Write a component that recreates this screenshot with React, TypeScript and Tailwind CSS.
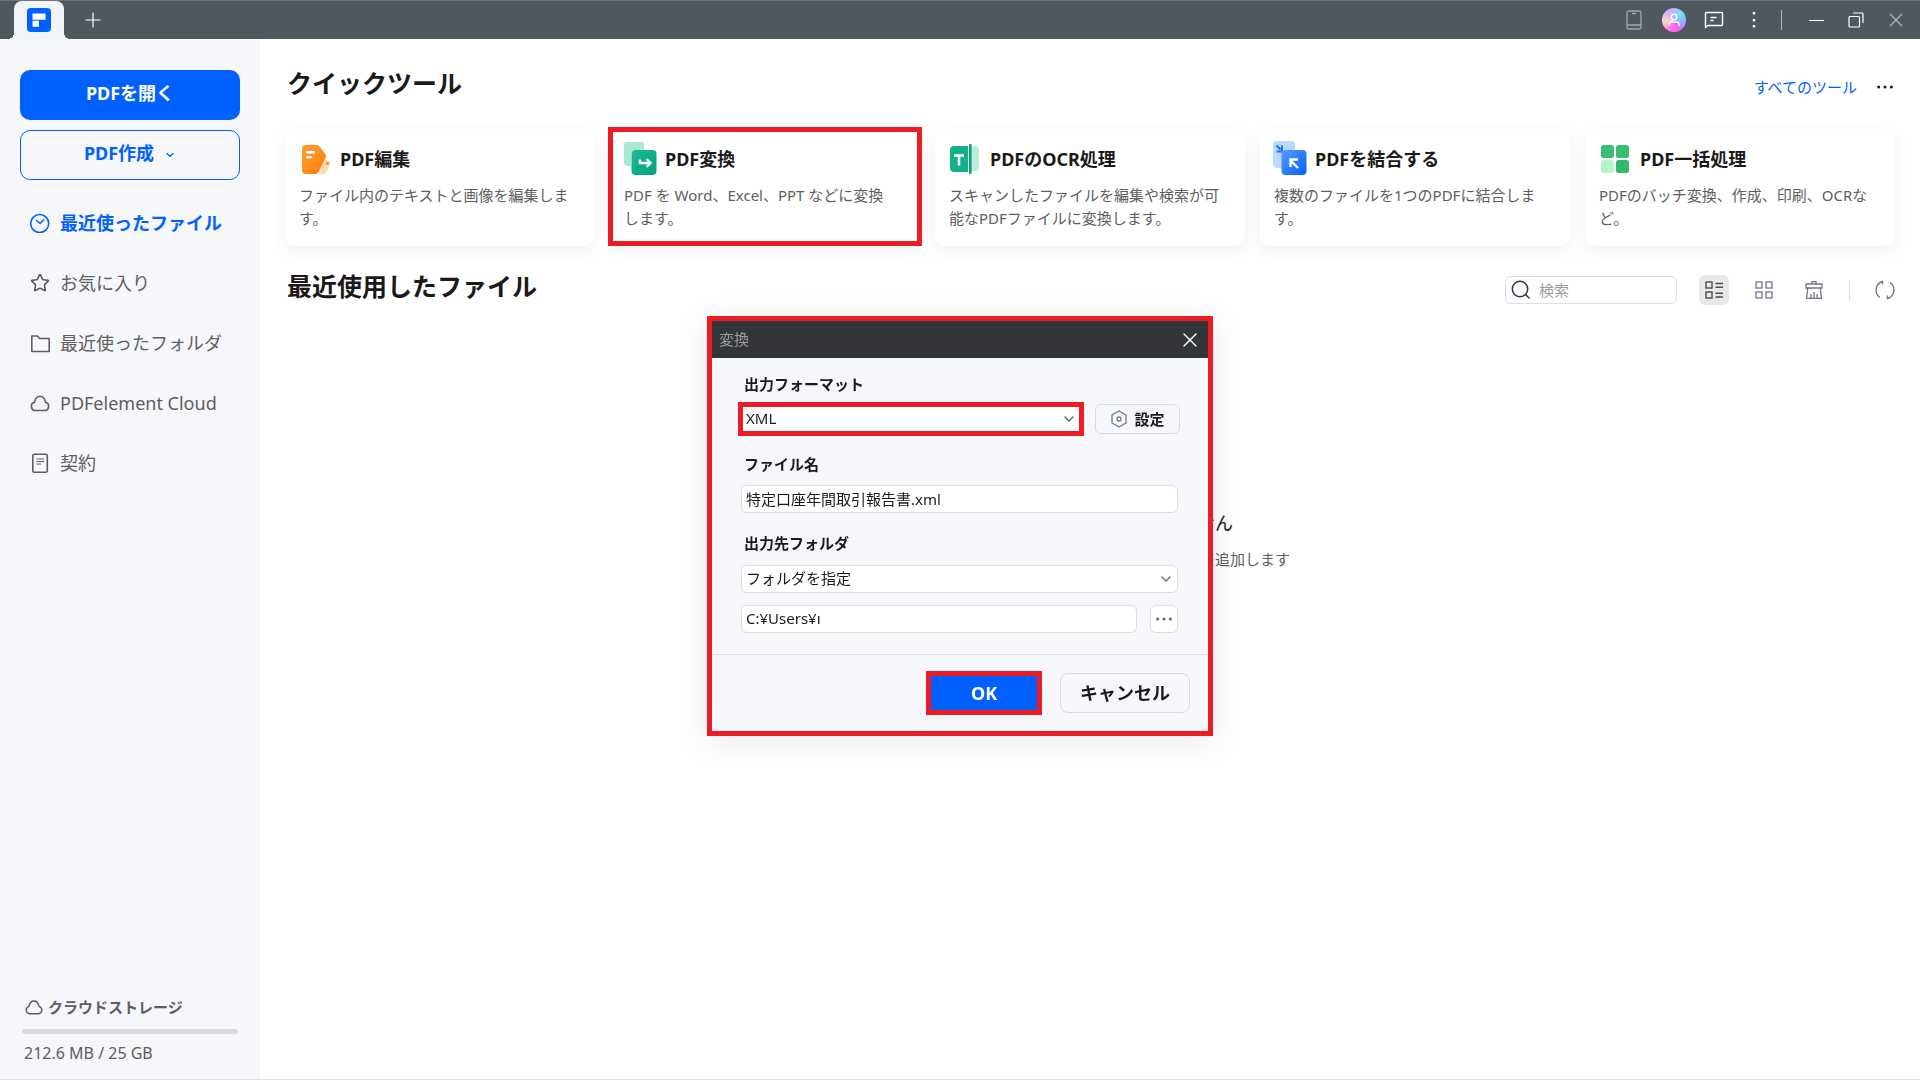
import { useState } from "react";
import type { ReactNode } from "react";
import { ChevronDown, Plus, Star, X } from "lucide-react";

const formats = ["XML", "Word", "Excel", "PPT"];
const folders = ["フォルダを指定", "元のフォルダ"];

function EditIcon() {
  return (
    <svg viewBox="0 0 34 34" className="size-[34px]">
      <defs>
        <linearGradient id="edit" x1="0" y1="0" x2="1" y2="1">
          <stop offset="0" stopColor="#ff9d33" />
          <stop offset="1" stopColor="#ff7f08" />
        </linearGradient>
      </defs>
      <path d="M7 3h10.500a4 4 0 0 1 3 1.400l6 8a3 3 0 0 1 .1 3.600l-7 14a4 4 0 0 1-3 2H7a4 4 0 0 1-4-4V7a4 4 0 0 1 4-4z" fill="url(#edit)" />
      <rect x="7" y="9" width="9" height="2.600" rx="1" fill="#fff" />
      <rect x="7" y="14" width="6" height="2.600" rx="1" fill="#fff" />
      <path d="M26 19.500c1.500-2 5.500-.8 5 1.500-.7 4-3 8-5 10.200-1.200 1.300-4.500 1.300-4.700-.7-.3-3 2.400-8 4.700-11z" fill="#ffd9a8" />
      <circle cx="28.500" cy="21.500" r="1.600" fill="#ff8a14" />
    </svg>
  );
}

function ConvertIcon() {
  return (
    <svg viewBox="0 0 34 34" className="size-[34px]">
      <defs>
        <linearGradient id="convert" x1="0" y1="0" x2="1" y2="1">
          <stop offset="0" stopColor="#22b896" />
          <stop offset="1" stopColor="#00a47e" />
        </linearGradient>
      </defs>
      <rect x="0" y="-1" width="20" height="25" rx="4" fill="#abe9d4" />
      <rect x="7" y="8" width="25" height="32" rx="4" fill="#fff" />
      <rect x="7.500" y="8" width="25" height="25" rx="4" fill="url(#convert)" />
      <path d="M16 17.500v3.500h9" fill="none" stroke="#fff" strokeWidth="2.400" />
      <path d="M22.500 17l4 4-4 4" fill="none" stroke="#fff" strokeWidth="2.400" />
    </svg>
  );
}

function OcrIcon() {
  return (
    <svg viewBox="0 0 34 34" className="size-[34px]">
      <rect x="20" y="4" width="10" height="25" rx="4" fill="#b8eedb" />
      <path d="M5 4h14v26H5a4 4 0 0 1-4-4V8a4 4 0 0 1 4-4z" fill="#14b08a" />
      <rect x="20" y="2" width="2.600" height="30" rx="1" fill="#00a47e" />
      <path d="M5 13.500h10M10 13.500v10" stroke="#fff" strokeWidth="2.500" />
    </svg>
  );
}

function MergeIcon() {
  return (
    <svg viewBox="0 0 34 34" className="size-[34px] overflow-visible">
      <defs>
        <linearGradient id="merge" x1="0" y1="0" x2="1" y2="1">
          <stop offset="0" stopColor="#5a9bff" />
          <stop offset="1" stopColor="#0061ff" />
        </linearGradient>
      </defs>
      <rect x="-1" y="-1" width="22" height="27" rx="4" fill="#b9d9ff" />
      <path d="M2.500 3.500l4 4M8 3.500v6H2.500" fill="none" stroke="#1a70ff" strokeWidth="2" />
      <rect x="7.500" y="8" width="25" height="25" rx="4" fill="url(#merge)" />
      <path d="M24 26l-7-7M16.500 25v-7.500H24" fill="none" stroke="#fff" strokeWidth="2.400" />
    </svg>
  );
}

function BatchIcon() {
  return (
    <svg viewBox="0 0 34 34" className="size-[34px]">
      <rect x="2" y="3" width="13" height="13" rx="2.500" fill="#3abf72" />
      <rect x="17" y="3" width="13" height="13" rx="2.500" fill="#3abf72" />
      <rect x="2" y="18" width="13" height="13" rx="2.500" fill="#b7f2cd" />
      <rect x="17" y="18" width="13" height="13" rx="2.500" fill="#34b96c" />
    </svg>
  );
}

const tools = [
  { title: "PDF編集", text: "ファイル内のテキストと画像を編集します。", icon: <EditIcon /> },
  { title: "PDF変換", text: "PDF を Word、Excel、PPT などに変換します。", icon: <ConvertIcon />, marked: true },
  { title: "PDFのOCR処理", text: "スキャンしたファイルを編集や検索が可能なPDFファイルに変換します。", icon: <OcrIcon /> },
  { title: "PDFを結合する", text: "複数のファイルを1つのPDFに結合します。", icon: <MergeIcon /> },
  { title: "PDF一括処理", text: "PDFのバッチ変換、作成、印刷、OCRなど。", icon: <BatchIcon /> },
];

const navItems = [
  {
    label: "最近使ったファイル",
    active: true,
    icon: (
      <svg viewBox="0 0 20 20" fill="none" stroke="currentColor" strokeWidth="1.500" className="size-5">
        <circle cx="9.700" cy="10.500" r="9" />
        <path d="M6.200 7l3.800 3.500L14 6.500" />
      </svg>
    ),
  },
  { label: "お気に入り", icon: <Star className="size-5" strokeWidth={2} /> },
  {
    label: "最近使ったフォルダ",
    icon: (
      <svg viewBox="0 0 20 20" fill="none" stroke="currentColor" strokeWidth="1.600" className="size-5">
        <path d="M1.800 3h5.700l2 2.500h9.700v13H1.800z" strokeLinejoin="round" />
      </svg>
    ),
  },
  { label: "PDFelement Cloud", icon: <CloudIcon className="size-5" /> },
  {
    label: "契約",
    icon: (
      <svg viewBox="0 0 20 20" fill="none" stroke="currentColor" strokeWidth="1.600" className="size-5">
        <rect x="2.800" y="1.200" width="14.500" height="18" rx="1.500" />
        <path d="M6.500 6h7.500M6.500 8.500h7.500M6.500 11h4.500" strokeWidth="1.200" />
      </svg>
    ),
  },
];

function CloudIcon({ className }: { className: string }) {
  return (
    <svg viewBox="0 0 20 20" fill="none" stroke="currentColor" strokeWidth="1.600" className={className}>
      <path d="M5 17.500a4.200 4.200 0 0 1-.6-8.200c.8-3.600 2.800-6 5.600-6s4.800 2.400 5.600 6a4.200 4.200 0 0 1-.6 8.200z" />
    </svg>
  );
}

function TitleButton({ label, children }: { label: string; children: ReactNode }) {
  return (
    <button aria-label={label} className="flex h-full w-10 items-center justify-center text-white">
      {children}
    </button>
  );
}

function TitleBar() {
  return (
    <header className="flex h-[39px] items-center border-t border-[#6d757c] bg-[#50575d]">
      <div className="relative ml-[14px] flex h-full w-[50px] items-center justify-center rounded-t-lg bg-[#f0f3f7]">
        <svg viewBox="0 0 26 26" className="size-[26px]">
          <rect x="1" y="1" width="24" height="24" rx="4" fill="#0061ff" />
          <path d="M6.500 6.500h13v6.300h-13zM6.500 13.800h6.500v6h-6.500z" fill="#fff" />
        </svg>
        <span className="absolute right-full bottom-0 size-[6px] bg-[radial-gradient(circle_at_0_0,transparent_6px,#f0f3f7_6px)]" />
        <span className="absolute bottom-0 left-full size-[6px] bg-[radial-gradient(circle_at_100%_0,transparent_6px,#f0f3f7_6px)]" />
      </div>
      <button aria-label="新しいタブ" className="ml-[17px] text-white">
        <Plus className="size-6" strokeWidth={1.2} />
      </button>
      <div className="ml-auto flex h-full items-center pr-1">
        <TitleButton label="モバイル">
          <svg viewBox="0 0 16 20" fill="none" stroke="#a3a8ac" strokeWidth="1.300" className="h-5 w-4">
            <rect x="1" y="1" width="14" height="18" rx="1.500" />
            <path d="M1 15h14M6 3.500h4" />
          </svg>
        </TitleButton>
        <TitleButton label="アカウント">
          <span className="flex size-6 items-center justify-center rounded-full bg-[conic-gradient(from_0deg,#b9b4ff,#6fe0ff,#8fb4ff,#f45cf4,#ff7ae0,#ffd9c0,#d9b8f4,#b9b4ff)]">
            <svg viewBox="0 0 12 14" fill="none" stroke="#fff" strokeWidth="1.300" className="h-[14px] w-3">
              <circle cx="6" cy="4" r="2.800" />
              <path d="M1 13v-1.500a2.500 2.500 0 0 1 2.500-2.500h5a2.500 2.500 0 0 1 2.500 2.500V13" />
            </svg>
          </span>
        </TitleButton>
        <TitleButton label="フィードバック">
          <svg viewBox="0 0 20 18" fill="none" stroke="currentColor" strokeWidth="1.400" className="h-[18px] w-5">
            <path d="M1.500 16.500V2.500a1 1 0 0 1 1-1h15a1 1 0 0 1 1 1v11a1 1 0 0 1-1 1H4z" strokeLinejoin="round" />
            <path d="M6.500 6.500h6M6.500 9.500h3" />
          </svg>
        </TitleButton>
        <TitleButton label="メニュー">
          <svg viewBox="0 0 4 18" fill="currentColor" className="h-[18px] w-1">
            <rect x="0.800" y="1" width="2.400" height="2.400" />
            <rect x="0.800" y="8" width="2.400" height="2.400" />
            <rect x="0.800" y="14" width="2.400" height="2.400" />
          </svg>
        </TitleButton>
        <span className="mr-[14px] ml-[7px] h-5 w-px bg-[#b0b4b7]" />
        <TitleButton label="最小化">
          <span className="h-px w-[15px] bg-white" />
        </TitleButton>
        <TitleButton label="元に戻す">
          <svg viewBox="0 0 16 16" fill="none" stroke="currentColor" strokeWidth="1.200" className="size-4">
            <rect x="1" y="4.500" width="10.500" height="10.500" rx="1" />
            <path d="M5 1h9a1 1 0 0 1 1 1v9" />
          </svg>
        </TitleButton>
        <TitleButton label="閉じる">
          <svg viewBox="0 0 14 14" stroke="#b5b9bc" strokeWidth="1.200" className="size-[14px]">
            <path d="M1 1l12 12M13 1L1 13" />
          </svg>
        </TitleButton>
      </div>
    </header>
  );
}

function Sidebar() {
  return (
    <aside className="flex w-[260px] shrink-0 flex-col bg-[#f5f7fb] px-5 pt-[31px] pb-[14px]">
      <button className="flex h-[50px] items-center justify-center rounded-[10px] bg-[#0061ff] pb-1 text-[18px] font-bold text-white">
        PDFを開く
      </button>
      <button className="mt-[10px] flex h-[50px] items-center justify-center gap-[10px] rounded-[10px] border border-[#0061ff] pb-1 text-[18px] font-bold text-[#0061ff]">
        PDF作成
        <ChevronDown className="mt-1 size-3" strokeWidth={2.5} />
      </button>
      <nav className="mt-[13px]">
        {navItems.map(item => (
          <a
            key={item.label}
            href="#"
            className={
              item.active
                ? "flex h-[60px] items-center gap-[10px] pl-[10px] text-[18px] font-bold text-[#0061ff]"
                : "flex h-[60px] items-center gap-[10px] pl-[10px] text-[18px] text-[#5e5e5e]"
            }
          >
            {item.icon}
            {item.label}
          </a>
        ))}
      </nav>

      {/* Storage */}
      <div className="mt-auto leading-6 text-[#5e5e5e]">
        <div className="flex items-center gap-[5px] pl-[5px] text-[15px] font-bold">
          <CloudIcon className="size-[18px]" />
          クラウドストレージ
        </div>
        <div className="mx-[2px] mt-[10px] h-[5px] rounded-full bg-[#dadada]" />
        <p className="mt-[7px] pl-1 text-[16px]">212.6 MB / 25 GB</p>
      </div>
    </aside>
  );
}

function QuickTools() {
  return (
    <section>
      <div className="flex h-10 items-center justify-between px-[2px]">
        <h1 className="text-[25px] leading-10 font-bold">クイックツール</h1>
        <div className="flex items-center gap-5 pt-2 text-[15px]">
          <a href="#" className="text-[#0061ff]">すべてのツール</a>
          <button aria-label="その他" className="text-[#1a1a1a]">
            <Dots />
          </button>
        </div>
      </div>
      <div className="mt-[26px] grid grid-cols-5 gap-[15px]">
        {tools.map(tool => (
          <article key={tool.title} className="relative h-[117px] rounded-[10px] bg-white pt-[13px] pr-6 pl-[14px] shadow-[0_5px_14px_rgba(60,90,140,0.08)]">
            <div className="flex h-[34px] items-center gap-[7px]">
              {tool.icon}
              <h3 className="text-[18px] leading-6 font-bold">{tool.title}</h3>
            </div>
            <p className="mt-2 text-[15px] leading-[23px] text-[#5e5e5e]">{tool.text}</p>
            {tool.marked && <span className="absolute -inset-x-[2px] -top-[2px] bottom-0 border-[5px] border-[#ed1c24]" />}
          </article>
        ))}
      </div>
    </section>
  );
}

function Dots() {
  return (
    <svg viewBox="0 0 16 4" fill="currentColor" className="h-1 w-4">
      <circle cx="1.700" cy="2" r="1.500" />
      <circle cx="8" cy="2" r="1.500" />
      <circle cx="14.300" cy="2" r="1.500" />
    </svg>
  );
}

function RecentFiles() {
  return (
    <section className="mt-[29px]">
      <div className="flex h-[30px] items-center">
        <h2 className="pb-2 pl-[2px] text-[25px] leading-10 font-bold">最近使用したファイル</h2>
        <label className="mr-[22px] ml-auto flex h-7 w-[172px] items-center gap-2 rounded-md border border-[#dedede] bg-white px-[5px]">
          <svg viewBox="0 0 20 20" fill="none" stroke="#2b3150" strokeWidth="1.500" className="size-5 shrink-0">
            <circle cx="9" cy="9" r="7.700" />
            <path d="M14.500 14.500l4 4" />
          </svg>
          <input type="text" aria-label="検索" placeholder="検索" className="w-full text-[15px] outline-none placeholder:text-[#9b9b9b]" />
        </label>
        <button aria-label="リスト表示" className="flex size-[30px] items-center justify-center rounded-md bg-[#e8e8e8]">
          <svg viewBox="0 0 18 18" fill="none" stroke="#4a4a55" strokeWidth="1.400" className="size-[18px]">
            <rect x="1" y="1" width="6" height="6" />
            <rect x="1" y="11" width="6" height="6" />
            <path d="M10.500 2.500H18M10.500 6.300H18M10.500 12.300H18M10.500 16H18" />
          </svg>
        </button>
        <button aria-label="グリッド表示" className="ml-[26px]">
          <svg viewBox="0 0 18 18" fill="none" stroke="#70768c" strokeWidth="1.300" className="size-[18px]">
            <rect x="1" y="1" width="6" height="6" />
            <rect x="11" y="1" width="6" height="6" />
            <rect x="1" y="11" width="6" height="6" />
            <rect x="11" y="11" width="6" height="6" />
          </svg>
        </button>
        <button aria-label="履歴を消去" className="ml-8">
          <svg viewBox="0 0 18 18" fill="none" stroke="#70768c" strokeWidth="1.300" className="size-[18px]">
            <path d="M1 7V3h16v4zM7 3V.7h4V3M2.500 7v3L1.500 17.300h15L15.500 10V7M6 17v-4M9 17v-6M12 17v-4" />
          </svg>
        </button>
        <span className="mr-[25px] ml-[26px] h-5 w-px bg-[#dcdcdc]" />
        <button aria-label="更新">
          <svg viewBox="0 0 20 20" fill="none" stroke="#70768c" strokeWidth="1.400" className="size-5">
            <path d="M7.500 1.500A9 9 0 0 0 5 17.500M12.500 18.500A9 9 0 0 0 15 2.500M4.500 2.500l3-1v3M15.500 17.500l-3 1v-3" />
          </svg>
        </button>
      </div>

      {/* Empty list */}
      <div className="mx-auto mt-[204px] w-[400px] text-right">
        <p className="pr-[57px] text-[18px] leading-7">せん</p>
        <p className="mt-[10px] text-[15px] leading-6 text-[#5e5e5e]">追加します</p>
      </div>
    </section>
  );
}

function ConvertDialog() {
  const [format, setFormat] = useState("XML");
  const [folder, setFolder] = useState(folders[0]);
  const [name, setName] = useState("特定口座年間取引報告書.xml");
  const [path, setPath] = useState("C:¥Users¥ı");

  const field = "h-7 w-full appearance-none rounded-md border border-[#dcdee2] bg-white px-1 pb-[2px] text-[15px] outline-none";

  return (
    <div className="fixed inset-x-0 top-[316px] flex justify-center">
      <div role="dialog" aria-label="変換" className="w-[506px] border-[5px] border-[#ed1c24] bg-[#f5f7fb] text-[15px] shadow-[0_5px_30px_rgba(0,0,0,0.09)]">
        <div className="flex h-[37px] items-center justify-between bg-[#333638] pr-[6px] pl-[7px]">
          <span className="text-[#999b9c]">変換</span>
          <button aria-label="閉じる" className="text-white">
            <X className="size-6" strokeWidth={1.4} />
          </button>
        </div>

        <div className="pt-[14px] pr-[30px] pb-[21px] pl-[29px]">
          <label htmlFor="format" className="block pl-[3px] leading-6 font-bold">出力フォーマット</label>
          <div className="mt-2 flex h-[30px] items-center gap-[14px]">
            <div className="relative flex-1">
              <select id="format" value={format} onChange={e => setFormat(e.target.value)} className={field}>
                {formats.map(item => <option key={item}>{item}</option>)}
              </select>
              <ChevronDown className="pointer-events-none absolute top-[6px] right-1 size-4 text-[#666]" />
              <span className="pointer-events-none absolute -inset-[3px] border-[5px] border-[#ed1c24]" />
            </div>
            <button className="-mr-[2px] flex h-[30px] w-[85px] items-center justify-center gap-[6px] rounded-md border border-[#dadce1] font-bold">
              <svg viewBox="0 0 18 18" fill="none" stroke="#70768c" strokeWidth="1.300" className="size-[18px]">
                <path d="M9 1l7 4v8l-7 4-7-4V5z" strokeLinejoin="round" />
                <circle cx="9" cy="9" r="2" />
              </svg>
              設定
            </button>
          </div>

          <label htmlFor="name" className="mt-[18px] block pl-[3px] leading-6 font-bold">ファイル名</label>
          <input id="name" type="text" value={name} onChange={e => setName(e.target.value)} className={`mt-[9px] block ${field}`} />

          <label htmlFor="folder" className="mt-[18px] block pl-[3px] leading-6 font-bold">出力先フォルダ</label>
          <div className="relative mt-[10px]">
            <select id="folder" value={folder} onChange={e => setFolder(e.target.value)} className={`block ${field}`}>
              {folders.map(item => <option key={item}>{item}</option>)}
            </select>
            <ChevronDown className="pointer-events-none absolute top-[6px] right-1 size-4 text-[#666]" />
          </div>
          <div className="mt-3 flex gap-[13px]">
            <input type="text" aria-label="フォルダのパス" value={path} onChange={e => setPath(e.target.value)} className={field} />
            <button aria-label="参照" className="flex size-7 shrink-0 items-center justify-center rounded-md border border-[#dcdee2] bg-white text-[#5c6484]">
              <Dots />
            </button>
          </div>
        </div>

        <div className="flex h-[77px] items-center justify-end gap-[18px] border-t border-[#dfe1e5] pr-[18px] text-[18px] font-bold">
          <button className="h-[44px] w-[116px] border-[5px] border-[#ed1c24] bg-[#0061ff] text-white">OK</button>
          <button className="h-10 w-[130px] rounded-lg border border-[#d9dbe0]">キャンセル</button>
        </div>
      </div>
    </div>
  );
}

export default function App() {
  return (
    <div className="flex min-h-screen flex-col border-b border-[#e2e2e4] bg-white font-['Noto_Sans','Noto_Sans_CJK_JP',sans-serif] text-[#1a1a1a]">
      <TitleBar />
      <div className="flex flex-1">
        <Sidebar />
        <main className="flex-1 px-[25px] pt-6">
          <QuickTools />
          <RecentFiles />
        </main>
      </div>
      <ConvertDialog />
    </div>
  );
}
